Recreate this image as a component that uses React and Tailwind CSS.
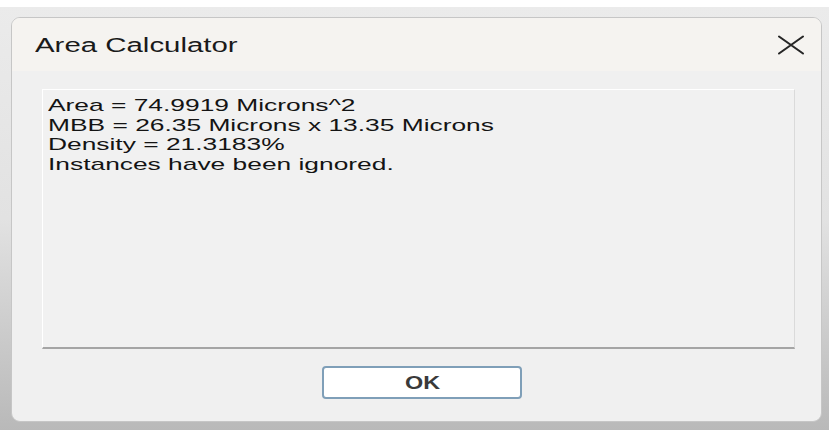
import React from 'react';

// Results shown by the area calculator
const lines = [
  'Area = 74.9919 Microns^2',
  'MBB = 26.35 Microns x 13.35 Microns',
  'Density = 21.3183%',
  'Instances have been ignored.',
];

const CloseIcon = () => (
  <svg width="28" height="20" viewBox="0 0 28 20" fill="none">
    <path d="M2 1.5L26 18.5M26 1.5L2 18.5" stroke="#262626" strokeWidth="2.1" strokeLinecap="round" />
  </svg>
);

const App = () => {
  return (
    <div className="w-[829px] h-[430px] flex flex-col bg-white overflow-hidden font-['Liberation_Sans',Arial,sans-serif]">
      <div className="h-[7px] bg-white" />
      <div className="flex-1 bg-gradient-to-b from-[#ebebeb] via-[#e2e2e2] to-[#b9b9b9] pt-[10px] pl-[11px]">
        <div className="w-[811px] h-[405px] flex flex-col rounded-[9px] border border-[#c6c6c6] bg-[#f0f0f0] overflow-hidden">
          {/* title bar */}
          <div className="h-[55px] flex items-center justify-between bg-[#f5f3f0] pl-[23px] pr-[16px]">
            <span className="text-[20px] leading-[24px] text-[#1a1a1a] origin-left scale-x-[1.47]">
              Area Calculator
            </span>
            <CloseIcon />
          </div>

          {/* body */}
          <div className="flex-1 flex flex-col pt-[18px] pl-[30px] pr-[26px] pb-[22px]">
            <div className="h-[260px] border-t border-l border-white border-r border-r-[#dadada] border-b-2 border-b-[#a5a5a5] bg-[#f1f1f1] pl-[5px] pt-[6px]">
              <div className="origin-top-left scale-x-[1.55] text-[17px] leading-[19.5px] text-[#141414]">
                {lines.map((line) => (
                  <div key={line} className="whitespace-nowrap">{line}</div>
                ))}
              </div>
            </div>
            <div className="flex justify-center mt-[17px] pl-[7px]">
              <button className="w-[200px] h-[33px] rounded-[4px] border-2 border-[#7f9fb8] bg-white flex items-center justify-center">
                <span className="text-[18px] leading-none font-bold text-[#3a3a3a] scale-x-[1.3]">OK</span>
              </button>
            </div>
          </div>
        </div>
      </div>
    </div>
  );
};

export default App;
